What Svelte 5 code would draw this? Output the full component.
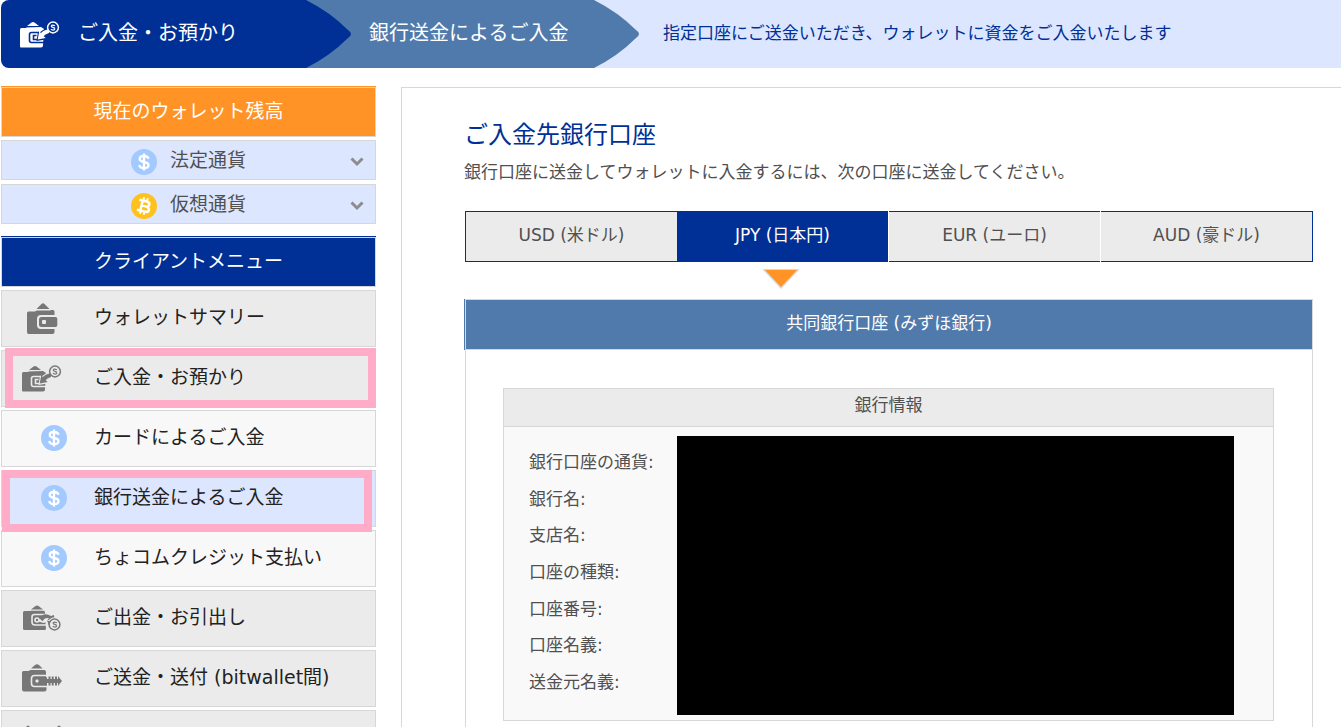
<script>
	const balances = [
		{ label: '法定通貨', icon: 'dollar' },
		{ label: '仮想通貨', icon: 'bitcoin' }
	];

	const menu = [
		{ label: 'ウォレットサマリー', icon: 'wallet' },
		{ label: 'ご入金・お預かり', icon: 'deposit', mark: 'parent' },
		{ label: 'カードによるご入金', icon: 'dollar', sub: true },
		{ label: '銀行送金によるご入金', icon: 'dollar', sub: true, active: true, mark: 'child' },
		{ label: 'ちょコムクレジット支払い', icon: 'dollar', sub: true },
		{ label: 'ご出金・お引出し', icon: 'withdraw' },
		{ label: 'ご送金・送付 (bitwallet間)', icon: 'transfer' },
		{ label: '', icon: 'exchange' }
	];

	const currencies = ['USD (米ドル)', 'JPY (日本円)', 'EUR (ユーロ)', 'AUD (豪ドル)'];
	let selected = 1;

	const fields = ['銀行口座の通貨', '銀行名', '支店名', '口座の種類', '口座番号', '口座名義', '送金元名義'];
</script>

{#snippet icon(name)}
	{#if name === 'dollar'}
		<svg class="coin" viewBox="0 0 26 26" aria-hidden="true">
			<circle cx="13" cy="13" r="13" fill="#a3caff" />
			<path d="M17.500 9.800C17 7.900 15.400 7 13 7c-2.600 0-4.300 1.100-4.300 3 0 4.200 8.800 1.800 8.800 6 0 2-1.800 3.200-4.500 3.200-2.600 0-4.400-1.100-4.800-3.200M13 4.500v17" fill="none" stroke="#fff" stroke-width="2.300" />
		</svg>
	{:else if name === 'bitcoin'}
		<svg class="coin" viewBox="0 0 26 26" aria-hidden="true">
			<circle cx="13" cy="13" r="13" fill="#ffc21c" />
			<g transform="rotate(14 13 13)" fill="none" stroke="#fff" stroke-width="2.500">
				<path d="M7 8H14.500c4.500 0 4.500 5 0 5h-4M7 18.300H15c5 0 5-5.300 0-5.300M10.500 8v10.300" />
				<path d="M11 4.500V8M14.800 4.500V8M11 18v3.500M14.800 18v3.500" stroke-width="2" />
			</g>
		</svg>
	{:else}
		<svg class="wallet" viewBox="0 0 41 34" aria-hidden="true">
			{#if name === 'wallet'}
				<path d="M6 12q0-1.500 1.500-1.500h6.500L16 9h16q1.500 0 1.500 1.500v20.500q0 2-2 2h-24Q6 33 6 31z" />
				<path class="cut" d="M13 9.500L22 0l8 9.500z" />
				<path d="M15.500 8l5-5q1.500-1.500 3 0L28.500 8z" />
				<path class="cut" d="M36.500 14H20q-4 0-4 4v6q0 4 4 4h16.500z" />
				<path d="M18 18.500q0-2.500 2.500-2.500H34.500q1.800 0 1.800 1.800v6.400q0 1.800-1.800 1.800H20.500q-2.500 0-2.500-2.500z" />
				<rect class="cut" x="21" y="19" width="4" height="4" rx="1" />
			{:else if name === 'deposit'}
				<path d="M1 12.500q0-1.500 1.500-1.500h4L8 10h14l3 2-1 16.500q0 2-2 2H2q-1 0-1-1z" />
				<path class="cut" d="M6 10.500L14 2l8 8z" />
				<path d="M8 9l4.500-3.500q1.500-1 3 0L20 9z" />
				<path class="cut-line" d="M20 15.500h-7.500q-2 0-2 2v6q0 2 2 2H25" />
				<path class="cut-line" d="M17.500 18.500h-3v4h4" />
				<path class="cut" d="M29 10.500l-5 2.500-3.500 2.500-1.500-1-1.500 9.500 9-1.500-1.500-2.500 5-3z" />
				<path d="M30 12.500q-5 .3-8 3.500l-1.800-1.500-1.500 8 8-1.500-2-1.800q1-1.700 5.300-3.200z" />
				<circle class="ring" cx="34" cy="10.500" r="5.400" />
				<path class="ring thin" d="M36 8.800q-3.500-1.500-3.700.4c0 1.500 3.600 1 3.500 2.700-.2 1.600-3 1.300-3.800.3" />
			{:else if name === 'withdraw'}
				<path d="M2 11.500q0-1.500 1.500-1.500h5l2-.5H22q2 0 2 2V17l1 10.500q0 1.500-1.500 1.500H3.500Q2 29 2 27.500z" />
				<path class="cut" d="M8 9.500l8-7.500 8 7.500z" />
				<path d="M10 8.500l4.500-3.500q1.500-1.200 3 0L22 8.500z" />
				<path class="cut-line" d="M24 13.500H13.500q-2.500 0-2.500 2.500v5q0 3 3 3H25" />
				<path class="cut" d="M17.500 20.500q3-9.500 11-7l7 3-1 6-9-1.500-3 1z" />
				<circle class="cut-line" cx="16" cy="19" r="2" />
				<path d="M18 17Q23 10.500 30 15l3-1 .5 6-7-1 1.500-1.700q-4-1.500-6.500 3z" />
				<circle cx="33.500" cy="23.500" r="7.200" class="cut" />
				<circle class="ring" cx="33.500" cy="23.500" r="5.400" />
				<path class="ring thin" d="M36 21.800q-3.500-1.500-3.900.4c0 1.500 3.600 1 3.500 2.700-.2 1.600-3 1.300-3.800.3" />
				<path d="M26 19.500l3.500 1-1.500 4z" />
			{:else if name === 'transfer'}
				<path d="M1 11.500q0-1.500 1.500-1.500h5l2-1H23q2 0 2 2v5.500h1v9h-.5v3q0 2-2 2H3q-2 0-2-2z" />
				<path class="cut" d="M8 8.500L16 1l8 7.500z" />
				<path d="M10 7.500l4-3.500q2-1.500 4 0L21.500 7.500z" />
				<path class="cut-line" d="M27 14.500H13.500q-3 0-3 3v5q0 3 3 3H27" />
				<path d="M13 16.500h13v7H13z" />
				<rect class="cut" x="14.500" y="18.500" width="3" height="3" rx="1" />
				<path d="M27.500 15.500h2v9h-2zM30.700 15.500h2v9h-2zM34 15.500h2v9h-2zM37 15l4 5-4 5z" />
				<path d="M26 18h13v4H26z" />
			{:else}
				<path d="M4 7l2-2q1-1 2 0l2 2zM35 7l2-2q1-1 2 0l2 2zM1 9h16v20H1zM30 9h11v20H30z" />
			{/if}
		</svg>
	{/if}
{/snippet}

<div class="page">
	<header class="crumbs">
		<div class="crumb crumb-main">
			{@render icon('deposit')}
			<span>ご入金・お預かり</span>
		</div>
		<svg class="tip tip-main" viewBox="0 0 45 68" preserveAspectRatio="none" aria-hidden="true">
			<path d="M0 0Q24 12 42 30Q48 34 42 38Q24 56 0 68z" />
		</svg>
		<div class="crumb crumb-sub">銀行送金によるご入金</div>
		<svg class="tip tip-sub" viewBox="0 0 45 68" preserveAspectRatio="none" aria-hidden="true">
			<path d="M0 0Q24 12 42 30Q48 34 42 38Q24 56 0 68z" />
		</svg>
		<p class="crumb-note">指定口座にご送金いただき、ウォレットに資金をご入金いたします</p>
	</header>

	<div class="layout">
		<aside class="sidebar">
			<div class="side-head orange"><h2>現在のウォレット残高</h2></div>
			<div class="balances">
				{#each balances as b (b.label)}
					<button type="button" class="balance">
						{@render icon(b.icon)}
						<span>{b.label}</span>
						<svg class="chevron" viewBox="0 0 14 10" aria-hidden="true">
							<path d="M1.500 1.500L7 7l5.500-5.500" fill="none" stroke="#8c8c8c" stroke-width="3" />
						</svg>
					</button>
				{/each}
			</div>

			<div class="side-head navy"><h2>クライアントメニュー</h2></div>
			<nav class="menu">
				{#each menu as item (item.label)}
					<div class="menu-row">
						<a href="#menu" class="menu-item" class:sub={item.sub} class:active={item.active}>
							<span class="menu-icon">{@render icon(item.icon)}</span>
							<span>{item.label}</span>
						</a>
						{#if item.mark}
							<span class="mark mark-{item.mark}"></span>
						{/if}
					</div>
				{/each}
			</nav>
		</aside>

		<main class="content">
			<h1>ご入金先銀行口座</h1>
			<p class="lead">銀行口座に送金してウォレットに入金するには、次の口座に送金してください。</p>

			<div class="tabs" role="tablist">
				{#each currencies as c, i (c)}
					<button
						type="button"
						role="tab"
						class="tab"
						class:selected={selected === i}
						aria-selected={selected === i}
						on:click={() => (selected = i)}
					>
						{c}
						{#if selected === i}
							<svg class="pointer" viewBox="0 0 36 20" aria-hidden="true">
								<path d="M0 0h36v1L18 20 0 1z" fill="#dcd8d4" />
								<path d="M2 1h32L18 18z" fill="#ff9326" />
							</svg>
						{/if}
					</button>
				{/each}
			</div>

			<section class="panel">
				<h2 class="panel-title">共同銀行口座 (みずほ銀行)</h2>
				<div class="bank">
					<h3>銀行情報</h3>
					<div class="bank-body">
						<table>
							<tbody>
								{#each fields as f (f)}
									<tr>
										<th scope="row">{f}:</th>
										<td></td>
									</tr>
								{/each}
							</tbody>
						</table>
						<div class="hidden-values"></div>
					</div>
				</div>
			</section>
		</main>
	</div>
</div>

<style>
	:global(body) {
		background: #fff;
	}

	.page {
		--navy: #003095;
		--steel: #517aac;
		--pale: #dde6ff;
		--line: #d7d7d7;
		height: 100vh;
		overflow: hidden auto;
		scrollbar-width: none;
		box-sizing: border-box;
		padding-left: 1px;
		font-family: 'DejaVu Sans', 'Noto Sans CJK JP', sans-serif;
		font-weight: 400;
		color: #505050;
	}

	.page *,
	.page *::before {
		box-sizing: border-box;
	}

	h1,
	h2,
	h3,
	p {
		margin: 0;
		font-weight: inherit;
	}

	button {
		font: inherit;
		color: inherit;
		border-radius: 0;
		cursor: pointer;
	}

	/* breadcrumb bar */
	.crumbs {
		display: flex;
		height: 68px;
		line-height: 66px;
		font-size: 20px;
		color: #fff;
		background: var(--pale);
		border-radius: 8px 0 0 8px;
		overflow: hidden;
	}

	.crumb {
		flex: none;
	}

	.crumb-main {
		display: flex;
		width: 305px;
		padding-left: 18px;
		gap: 18px;
		background: var(--navy);
		--ink: #fff;
		--cut: var(--navy);
	}

	.crumb-main > :global(svg) {
		align-self: center;
	}

	.crumb-sub {
		width: 243px;
		padding-left: 18px;
		background: var(--steel);
	}

	.tip {
		flex: none;
		width: 45px;
		height: 68px;
	}

	.tip-main {
		background: var(--steel);
		fill: var(--navy);
	}

	.tip-sub {
		background: var(--pale);
		fill: var(--steel);
	}

	.crumb-note {
		padding-left: 24px;
		font-size: 17px;
		color: var(--navy);
		white-space: nowrap;
	}

	.layout {
		display: flex;
		gap: 25px;
		padding-top: 18px;
	}

	/* icons */
	.wallet {
		flex: none;
		width: 41px;
		height: 34px;
		fill: var(--ink);
	}

	.wallet .cut {
		fill: var(--cut);
	}

	.wallet .cut-line {
		fill: none;
		stroke: var(--cut);
		stroke-width: 1.6;
	}

	.wallet .ring {
		fill: none;
		stroke: var(--ink);
		stroke-width: 1.5;
	}

	.wallet .thin {
		stroke-width: 1.2;
	}

	.coin {
		flex: none;
		width: 26px;
		height: 26px;
	}

	/* sidebar */
	.sidebar {
		flex: none;
		width: 375px;
	}

	.side-head {
		text-align: center;
		color: #fff;
	}

	.side-head h2 {
		height: 50px;
		line-height: 46px;
		font-size: 19px;
		border: 1px solid var(--line);
	}

	.orange {
		border-top: 1px solid #ff9326;
		background: #ff9326;
	}

	.navy {
		border-top: 1px solid var(--navy);
		background: var(--navy);
	}

	.balances {
		display: flex;
		flex-direction: column;
		gap: 4px;
		padding: 3px 0 12px;
	}

	.balance {
		position: relative;
		display: flex;
		justify-content: center;
		align-items: center;
		gap: 13px;
		height: 40px;
		padding: 0;
		border: 1px solid var(--line);
		background: var(--pale);
		font-size: 19px;
		line-height: 36px;
	}

	.balance .coin {
		margin-top: 4px;
	}

	.chevron {
		position: absolute;
		right: 11px;
		top: 16px;
		width: 14px;
		height: 10px;
	}

	.menu {
		display: flex;
		flex-direction: column;
		gap: 3px;
		padding-top: 3px;
	}

	.menu-row {
		position: relative;
	}

	.menu-item {
		display: flex;
		align-items: center;
		height: 57px;
		padding-bottom: 2px;
		border: 1px solid var(--line);
		background: #ebebeb;
		color: #222;
		font-size: 19px;
		line-height: 53px;
		text-decoration: none;
		--ink: #777;
		--cut: #ebebeb;
	}

	.menu-icon {
		display: flex;
		width: 92px;
		padding-left: 19px;
	}

	.sub {
		background: #f8f8f8;
	}

	.sub .menu-icon {
		padding-left: 39px;
	}

	.active {
		background: var(--pale);
	}

	.mark {
		position: absolute;
		z-index: 1;
		border: 8px solid #ffacc8;
		pointer-events: none;
	}

	.mark-parent {
		inset: -2px 0 -1px 4px;
	}

	.mark-child {
		inset: 0 4px -5px 1px;
	}

	/* main column */
	.content {
		flex: 1;
		min-width: 0;
		display: flex;
		flex-direction: column;
		margin-top: 1px;
		padding: 29px 28px 0 62px;
		border: 1px solid var(--line);
		border-width: 1px 0 0 1px;
	}

	h1 {
		font-size: 24px;
		line-height: 36px;
		color: var(--navy);
	}

	.lead {
		padding: 4px 0 24px;
		font-size: 17px;
		line-height: 30px;
	}

	.tabs {
		display: flex;
		margin-left: 1px;
		border: 1px solid var(--navy);
		border-width: 0 1px;
	}

	.tab {
		position: relative;
		flex: 1;
		height: 51px;
		padding: 0 0 2px;
		border: 1px solid var(--navy);
		border-width: 1px 0;
		background: #ebebeb;
		font-size: 17px;
		line-height: 45px;
	}

	.tab + .tab {
		margin-left: 1px;
	}

	.tab.selected {
		margin-left: 0;
		background: var(--navy);
		color: #fff;
	}

	.pointer {
		position: absolute;
		left: calc(50% - 20px);
		top: 57px;
		width: 36px;
		height: 20px;
	}

	.panel {
		flex: 1;
		margin: 37px 0 0 1px;
		border: 1px solid var(--line);
		border-width: 0 1px;
	}

	.panel-title {
		height: 51px;
		border: 1px solid var(--line);
		border-width: 1px 0;
		background: var(--steel);
		box-shadow: -1px 0 0 var(--line), -2px 0 0 var(--steel);
		color: #fff;
		font-size: 17px;
		line-height: 47px;
		text-align: center;
	}

	.bank {
		margin: 38px 38px 0 37px;
		border: 1px solid var(--line);
		background: #f9f9f9;
	}

	.bank h3 {
		height: 38px;
		border-bottom: 1px solid var(--line);
		background: #ebebeb;
		font-size: 17px;
		line-height: 33px;
		text-align: center;
	}

	.bank-body {
		position: relative;
		padding: 17px 25px 20px;
	}

	table {
		width: 100%;
		height: 256px;
		border-collapse: collapse;
		font-size: 17px;
		line-height: 34px;
	}

	th {
		width: 148px;
		padding: 0;
		font-weight: inherit;
		text-align: left;
		white-space: nowrap;
	}

	td {
		padding: 0;
	}

	.hidden-values {
		position: absolute;
		inset: 9px 39px 5px 173px;
		background: #000;
	}
</style>
